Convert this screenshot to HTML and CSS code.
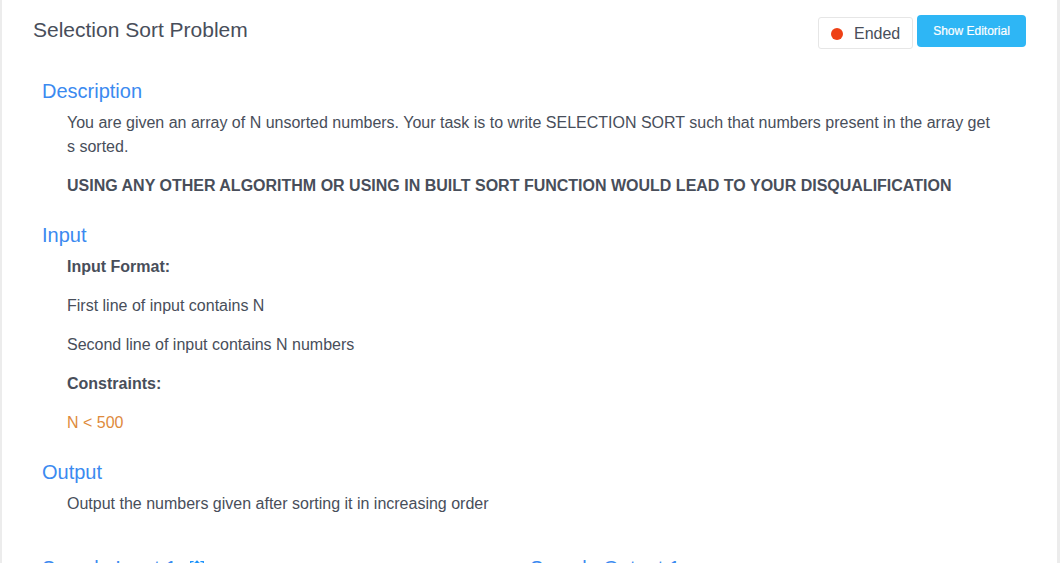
FILE: index.html
```html
<!DOCTYPE html>
<html lang="en">
<head>
<meta charset="utf-8">
<title>Selection Sort Problem</title>
<link rel="stylesheet" href="styles.css">
</head>
<body>
<main class="card">
  <header class="header">
    <h1 class="title">Selection Sort Problem</h1>
    <div class="actions">
      <div class="status"><span class="dot"></span>Ended</div>
      <button class="editorial">Show Editorial</button>
    </div>
  </header>
  <section class="section description">
    <h2>Description</h2>
    <p>You are given an array of N unsorted numbers. Your task is to write SELECTION SORT such that numbers present in the array get<br>s sorted.</p>
    <p><strong>USING ANY OTHER ALGORITHM OR USING IN BUILT SORT FUNCTION WOULD LEAD TO YOUR DISQUALIFICATION</strong></p>
  </section>
  <section class="section">
    <h2>Input</h2>
    <p><strong>Input Format:</strong></p>
    <p>First line of input contains N</p>
    <p>Second line of input contains N numbers</p>
    <p><strong>Constraints:</strong></p>
    <p class="constraint">N &lt; 500</p>
  </section>
  <section class="section">
    <h2>Output</h2>
    <p>Output the numbers given after sorting it in increasing order</p>
  </section>
  <div class="samples">
    <h3>Sample Input 1 <svg class="copy" width="14" height="16" viewBox="0 0 14 16" fill="none" stroke="currentColor" stroke-width="1.3"><path d="M3.6 1.6H.7V15h12.6V1.6h-2.9"/><path d="M4.6 4V2.2h.9a1.5 1.8 0 0 1 3 0h.9V4z" fill="currentColor" stroke="none"/></svg></h3>
    <h3>Sample Output 1</h3>
  </div>
</main>
</body>
</html>
```

FILE: styles.css
```css
* { box-sizing: border-box; }
body {
  margin: 0;
  height: 563px;
  overflow: hidden;
  background: #fff;
  color: #484e5a;
  font: 16px/24px "Liberation Sans", Arial, sans-serif;
}
.card {
  height: 563px;
  overflow: hidden;
  border-left: 2px solid #ececec;
  border-right: 3px solid #ececec;
}
.header { display: flex; justify-content: space-between; height: 76px; padding: 15px 31px 0 31px; }
.title { margin: 0; font-size: 21px; line-height: 30px; font-weight: 400; }
.actions { display: flex; gap: 4px; align-items: flex-start; }
.status {
  display: flex; align-items: center; gap: 11px;
  width: 95px; height: 32px; margin-top: 2px; padding: 2px 0 0 12px;
  border: 1px solid #e6e6e6; border-radius: 3px;
}
.dot { width: 12px; height: 12px; border-radius: 50%; background: #ee4015; }
.editorial {
  width: 109px; height: 32px; padding: 0;
  border: 0; border-radius: 4px; background: #2eb6f5; color: #fff;
  font: 12px/16px "Liberation Sans", Arial, sans-serif;
  -webkit-text-stroke: .2px #fff;
}
.section { padding: 0 40px; margin-bottom: 22px; }
h2, h3 { margin: 0; color: #3b8af0; font-size: 20px; font-weight: 400; line-height: 30px; }
h2 { height: 35px; }
.section p { margin: 0 0 15px 25px; white-space: nowrap; }
.section .constraint { color: #de8a3c; }
.samples { display: grid; grid-template-columns: 488px 1fr; padding: 15px 0 0 40px; }
.copy { margin-left: 8px; color: #1c93fb; vertical-align: -1px; }
```
